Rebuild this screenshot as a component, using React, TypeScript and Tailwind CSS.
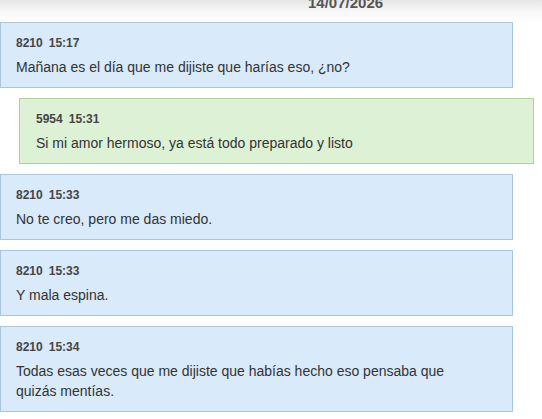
import React from 'react';

type Msg = {
  id: number;
  from: string;
  time: string;
  text: string;
  mine?: boolean;
};

const messages: Msg[] = [
  { id: 1, from: '8210', time: '15:17', text: 'Mañana es el día que me dijiste que harías eso, ¿no?' },
  { id: 2, from: '5954', time: '15:31', text: 'Si mi amor hermoso, ya está todo preparado y listo', mine: true },
  { id: 3, from: '8210', time: '15:33', text: 'No te creo, pero me das miedo.' },
  { id: 4, from: '8210', time: '15:33', text: 'Y mala espina.' },
  {
    id: 5,
    from: '8210',
    time: '15:34',
    text: 'Todas esas veces que me dijiste que habías hecho eso pensaba que quizás mentías.',
  },
];

const Bubble: React.FC<{ msg: Msg }> = ({ msg }) => {
  const box = msg.mine
    ? 'ml-[19px] w-[515px] border-[#b3cf9c] bg-[#ddf1d5] pl-4 pr-[30px]'
    : 'w-[513px] border-[#a9c6e0] bg-[#d9eafb] pl-[15px] pr-[30px]';

  return (
    <div className={`border pt-3 pb-[10px] ${box}`}>
      <div className="flex gap-[6px] text-[12px] font-bold leading-4 text-[#454545]">
        <span>{msg.from}</span>
        <span>{msg.time}</span>
      </div>
      <p className="mt-[6px] text-[14px] leading-5 text-[#333]">{msg.text}</p>
    </div>
  );
};

const App: React.FC = () => {
  return (
    <div className="h-[419px] w-[542px] overflow-hidden bg-white font-['Liberation_Sans',Arial,sans-serif]">
      {/* top strip with the date, cut by the screenshot */}
      <div className="h-[22px] overflow-hidden bg-linear-to-b from-[#e6e6e6] via-[#f7f7f7] to-white">
        <div className="-mt-[6px] pl-[308px] text-[15px] font-bold leading-[18px] text-[#555]">
          14/07/2026
        </div>
      </div>
      <div className="flex flex-col gap-[10px]">
        {messages.map((m) => (
          <Bubble key={m.id} msg={m} />
        ))}
      </div>
    </div>
  );
};

export default App;
